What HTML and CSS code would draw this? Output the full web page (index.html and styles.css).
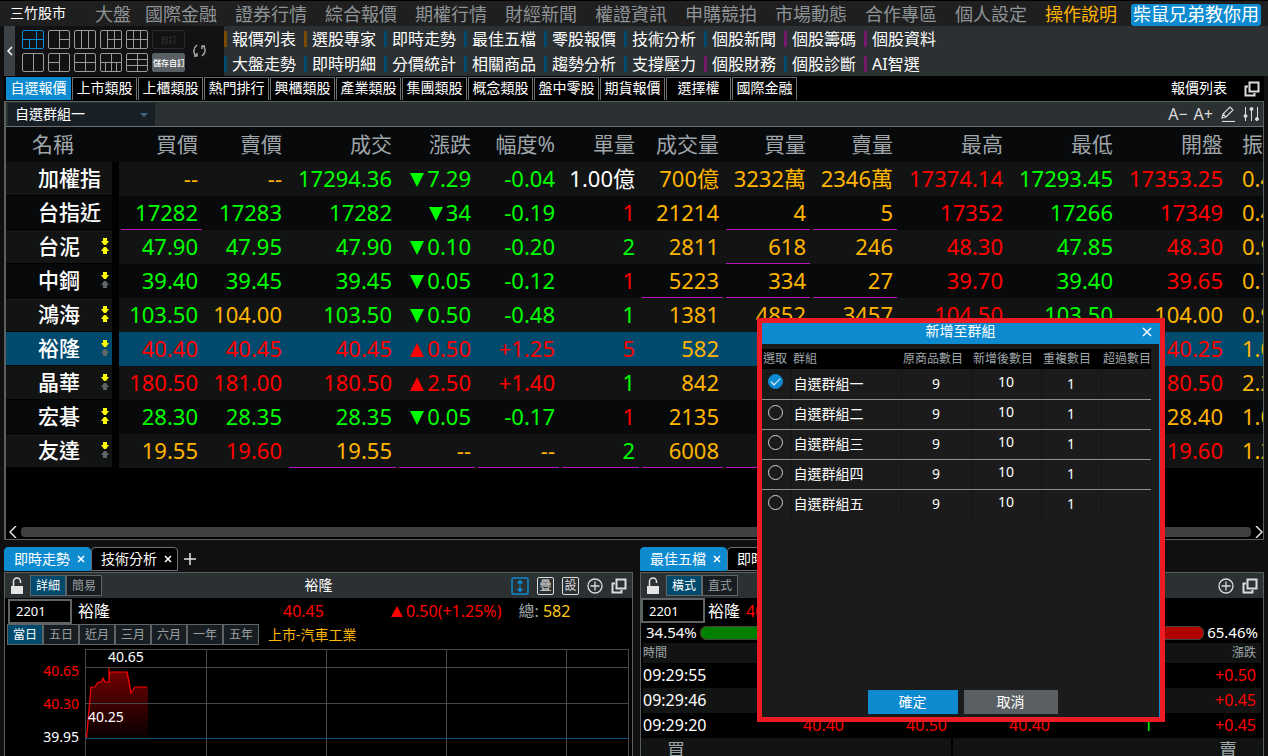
FILE: index.html
```html
<!DOCTYPE html>
<html lang="zh-Hant">
<head>
<meta charset="utf-8">
<title>三竹股市</title>
<link rel="stylesheet" href="styles.css">
</head>
<body>
<svg class="defs" aria-hidden="true">
  <symbol id="down" viewBox="0 0 8 7"><path d="M2 0h4v3h2L5 7H3L0 3h2z"/></symbol>
  <symbol id="up" viewBox="0 0 8 7"><path d="M2 7h4V4h2L5 0H3L0 4h2z"/></symbol>
  <symbol id="windows" viewBox="0 0 16 16"><path d="M5.500 1.500h9v9h-9zM4 5.500H1.500v9h9V12" fill="none" stroke="#dcdcdc" stroke-width="2"/></symbol>
  <symbol id="plus" viewBox="0 0 16 16"><path d="M8 3.500v9M3.500 8h9" stroke="#dcdcdc" stroke-width="1.300"/><circle cx="8" cy="8" r="7" fill="none" stroke="#dcdcdc" stroke-width="1.300"/></symbol>
  <symbol id="lock" viewBox="0 0 12 18"><path d="M2.500 9V4.500a3.500 3.500 0 0 1 7 0V6" fill="none" stroke="#e4e4e4" stroke-width="1.500"/><path d="M0 9h12v8H0z" fill="#e4e4e4"/></symbol>
  <symbol id="close" viewBox="0 0 8 8"><path d="M1 1l6 6M7 1L1 7" stroke="#fff" stroke-width="1.500"/></symbol>
</svg>
<div class="app">
  <header class="menubar">
    <h1 class="brand">三竹股市</h1>
    <nav class="menu">
      <a href="#" class="short">大盤</a><a href="#">國際金融</a><a href="#">證券行情</a><a href="#">綜合報價</a><a href="#">期權行情</a><a href="#">財經新聞</a><a href="#">權證資訊</a><a href="#">申購競拍</a><a href="#">市場動態</a><a href="#">合作專區</a><a href="#">個人設定</a><a href="#" class="gold">操作說明</a><a href="#" class="promo">柴鼠兄弟教你用</a>
    </nav>
  </header>

  <section class="ribbon">
    <button class="collapse" aria-label="收合"><svg width="6" height="10" viewBox="0 0 6 10"><path d="M5 1L1 5l4 4" fill="none" stroke="#fff" stroke-width="1.500"/></svg></button>
    <div class="layouts">
      <div class="layout-grid">
        <button class="on" aria-label="版面一"><svg viewBox="0 0 22 19"><path d="M14.500 0v19M0 9.500h22M7.500 9.500V19"/></svg></button>
        <button aria-label="版面二"><svg viewBox="0 0 22 19"><path d="M11.500 0v19M11.500 9.500H22"/></svg></button>
        <button aria-label="版面三"><svg viewBox="0 0 22 19"><path d="M7.500 0v19M14.500 0v19"/></svg></button>
        <button aria-label="版面四"><svg viewBox="0 0 22 19"><path d="M7.500 0v19M14.500 0v19M7.500 9.500H22"/></svg></button>
        <button aria-label="版面五"><svg viewBox="0 0 22 19"><path d="M7.500 0v19M14.500 0v19M0 9.500h22"/></svg></button>
        <button class="custom off">自訂</button>
        <button aria-label="版面六"><svg viewBox="0 0 22 19"><path d="M11.500 0v19"/></svg></button>
        <button aria-label="版面七"><svg viewBox="0 0 22 19"><path d="M11.500 0v19M0 9.500h11"/></svg></button>
        <button aria-label="版面八"><svg viewBox="0 0 22 19"><path d="M11.500 0v19M0 9.500h22"/></svg></button>
        <button aria-label="版面九"><svg viewBox="0 0 22 19"><path d="M11.500 0v19M0 9.500h22M5.500 9.500V19M16.500 9.500V19"/></svg></button>
        <button aria-label="版面十"><svg viewBox="0 0 22 19"><path d="M11.500 0v19M0 6.500h22M0 12.500h22"/></svg></button>
        <button class="custom">儲存自訂</button>
      </div>
      <button class="sync" aria-label="同步"><svg width="13" height="14" viewBox="0 0 13 14"><path d="M4 1C0 4 0 9 3 12M4 12.500V9M4 12H1M9 12c4-3 4-8 1-10.500M9 1.500V5M9 2h3" fill="none" stroke="#a8a8a8" stroke-width="1.500"/></svg></button>
    </div>
    <nav class="shortcuts">
      <a href="#" class="o">報價列表</a><a href="#" class="o">選股專家</a><a href="#">即時走勢</a><a href="#">最佳五檔</a><a href="#">零股報價</a><a href="#">技術分析</a><a href="#">個股新聞</a><a href="#" class="p">個股籌碼</a><a href="#" class="p">個股資料</a>
      <a href="#">大盤走勢</a><a href="#">即時明細</a><a href="#">分價統計</a><a href="#">相關商品</a><a href="#">趨勢分析</a><a href="#">支撐壓力</a><a href="#" class="p">個股財務</a><a href="#">個股診斷</a><a href="#" class="p">AI智選</a>
    </nav>
  </section>

  <section class="quote-tabs">
    <button class="on">自選報價</button><button>上市類股</button><button>上櫃類股</button><button>熱門排行</button><button>興櫃類股</button><button>產業類股</button><button>集團類股</button><button>概念類股</button><button>盤中零股</button><button>期貨報價</button><button>選擇權</button><button>國際金融</button>
    <span class="tab-title">報價列表</span>
    <svg width="16" height="16"><use href="#windows"/></svg>
  </section>

  <main class="quotes">
    <div class="quote-tools">
      <label class="group-pick"><select aria-label="自選群組"><option>自選群組一</option></select></label>
      <button aria-label="縮小字體">A−</button><button aria-label="放大字體">A+</button>
      <button aria-label="編輯"><svg width="14" height="16" viewBox="0 0 14 16" fill="none" stroke="#dcdcdc" stroke-width="1.200"><path d="M1 12l1-4 7-7 3 3-7 7zM2 8l3 3"/><path d="M1 15.500h13"/></svg></button>
      <button aria-label="欄位設定"><svg width="16" height="16" viewBox="0 0 16 16" stroke="#dcdcdc" fill="#dcdcdc"><path d="M2.500 1v14M8.500 1v14M14.500 1v14"/><circle cx="2.500" cy="10" r="1.500"/><circle cx="8.500" cy="3" r="1.500"/><circle cx="14" cy="13" r="1.500"/></svg></button>
    </div>
    <div class="quote-body">
    <table class="quote-table">
      <colgroup><col class="c-name"><col class="c-a"><col class="c-a"><col class="c-x"><col class="c-d"><col class="c-a"><col class="c-b"><col class="c-a"><col class="c-c"><col class="c-c"><col class="c-x"><col class="c-x"><col class="c-x"><col class="c-x"></colgroup>
      <thead><tr><th>名稱</th><th>買價</th><th>賣價</th><th>成交</th><th>漲跌</th><th>幅度%</th><th>單量</th><th>成交量</th><th>買量</th><th>賣量</th><th>最高</th><th>最低</th><th>開盤</th><th>振幅%</th></tr></thead>
      <tbody>
      <tr><th>加權指</th><td class="y">--</td><td class="y">--</td><td class="g">17294.36</td><td class="g"><i class="dn"></i>7.29</td><td class="g">-0.04</td><td>1.00億</td><td class="y">700億</td><td class="y">3232萬</td><td class="y">2346萬</td><td class="r">17374.14</td><td class="g">17293.45</td><td class="r">17353.25</td><td class="y">0.47</td></tr>
      <tr><th>台指近</th><td class="g u">17282</td><td class="g">17283</td><td class="g">17282</td><td class="g"><i class="dn"></i>34</td><td class="g">-0.19</td><td class="r">1</td><td class="y">21214</td><td class="y u">4</td><td class="y u">5</td><td class="r">17352</td><td class="g">17266</td><td class="r">17349</td><td class="y">0.49</td></tr>
      <tr><th>台泥<span class="marks"><svg class="hot"><use href="#down"/></svg><svg class="hot"><use href="#up"/></svg></span></th><td class="g">47.90</td><td class="g">47.95</td><td class="g">47.90</td><td class="g"><i class="dn"></i>0.10</td><td class="g">-0.20</td><td class="g">2</td><td class="y">2811</td><td class="y u">618</td><td class="y">246</td><td class="r">48.30</td><td class="g">47.85</td><td class="r">48.30</td><td class="y">0.93</td></tr>
      <tr><th>中鋼<span class="marks"><svg class="hot"><use href="#down"/></svg><svg><use href="#up"/></svg></span></th><td class="g">39.40</td><td class="g">39.45</td><td class="g">39.45</td><td class="g"><i class="dn"></i>0.05</td><td class="g">-0.12</td><td class="r">1</td><td class="y u">5223</td><td class="y u">334</td><td class="y u">27</td><td class="r">39.70</td><td class="g">39.40</td><td class="r">39.65</td><td class="y">0.75</td></tr>
      <tr><th>鴻海<span class="marks"><svg class="hot"><use href="#down"/></svg><svg class="hot"><use href="#up"/></svg></span></th><td class="g">103.50</td><td class="y">104.00</td><td class="g">103.50</td><td class="g"><i class="dn"></i>0.50</td><td class="g">-0.48</td><td class="g">1</td><td class="y">1381</td><td class="y">4852</td><td class="y">3457</td><td class="r">104.50</td><td class="g">103.50</td><td class="y">104.00</td><td class="y">0.96</td></tr>
      <tr class="sel"><th>裕隆<span class="marks"><svg class="hot"><use href="#down"/></svg><svg><use href="#up"/></svg></span></th><td class="r">40.40</td><td class="r">40.45</td><td class="r">40.45</td><td class="r"><i class="rise"></i>0.50</td><td class="r">+1.25</td><td class="r">5</td><td class="y">582</td><td></td><td></td><td></td><td></td><td class="r">40.25</td><td class="y">1.00</td></tr>
      <tr><th>晶華<span class="marks"><svg class="hot"><use href="#down"/></svg><svg><use href="#up"/></svg></span></th><td class="r">180.50</td><td class="r">181.00</td><td class="r">180.50</td><td class="r"><i class="rise"></i>2.50</td><td class="r">+1.40</td><td class="g">1</td><td class="y">842</td><td></td><td></td><td></td><td></td><td class="r">180.50</td><td class="y">2.25</td></tr>
      <tr><th>宏碁<span class="marks"><svg class="hot"><use href="#down"/></svg><svg class="hot"><use href="#up"/></svg></span></th><td class="g">28.30</td><td class="g">28.35</td><td class="g">28.35</td><td class="g"><i class="dn"></i>0.05</td><td class="g">-0.17</td><td class="r">1</td><td class="y">2135</td><td></td><td></td><td></td><td></td><td class="y">28.40</td><td class="y">1.06</td></tr>
      <tr><th>友達<span class="marks"><svg class="hot"><use href="#down"/></svg><svg><use href="#up"/></svg></span></th><td class="y">19.55</td><td class="r">19.60</td><td class="y u">19.55</td><td class="y u">--</td><td class="y u">--</td><td class="g u">2</td><td class="y u">6008</td><td class="u"></td><td></td><td></td><td></td><td class="r">19.60</td><td class="y">1.28</td></tr>
      </tbody>
    </table>
    </div>
    <div class="scroll">
      <svg width="8" height="12" viewBox="0 0 8 12"><path d="M7 0L1 6l6 6" fill="none" stroke="#e0e0e0" stroke-width="1.500"/></svg>
      <span class="thumb"></span>
      <svg width="8" height="12" viewBox="0 0 8 12"><path d="M1 0l6 6-6 6" fill="none" stroke="#e0e0e0" stroke-width="1.500"/></svg>
    </div>
  </main>

  <div class="lower">
    <section class="pane">
      <div class="pane-tabs">
        <button class="on">即時走勢<svg width="8" height="8"><use href="#close"/></svg></button><button>技術分析<svg width="8" height="8"><use href="#close"/></svg></button>
        <button class="add" aria-label="新增頁籤"><svg width="12" height="12" viewBox="0 0 12 12"><path d="M6 0v12M0 6h12" stroke="#e4e4e4" stroke-width="1.500"/></svg></button>
      </div>
      <div class="pane-box">
        <div class="pane-tools">
          <svg width="12" height="18"><use href="#lock"/></svg>
          <div class="seg"><button class="on">詳細</button><button>簡易</button></div>
          <h2>裕隆</h2>
          <div class="icons">
            <svg width="18" height="18" viewBox="0 0 18 18"><rect x="1" y="1" width="16" height="16" rx="1" fill="none" stroke="#0e8bd0" stroke-width="1.500"/><path d="M9 4v10M6.500 6L9 3l2.500 3zM6.500 12L9 15l2.500-3z" fill="#0e8bd0" stroke="#0e8bd0"/></svg>
            <button class="glyph">疊</button><button class="glyph">設</button>
            <svg width="16" height="16"><use href="#plus"/></svg>
            <svg width="16" height="16"><use href="#windows"/></svg>
          </div>
        </div>
        <div class="stock-row">
          <input value="2201" aria-label="股票代號"><span class="sname">裕隆</span><span class="r price">40.45</span><span class="r chg"><i class="rise small"></i>0.50(+1.25%)</span><span class="total">總: <b>582</b></span>
        </div>
        <div class="period-row">
          <div class="seg"><button class="on">當日</button><button>五日</button><button>近月</button><button>三月</button><button>六月</button><button>一年</button><button>五年</button></div>
          <span class="y">上市-汽車工業</span>
        </div>
        <div class="chart">
          <div class="axis"><span class="r">40.65</span><span class="r">40.30</span><span>39.95</span></div>
          <svg class="plot">
            <defs><linearGradient id="fade" x1="0" y1="0" x2="0" y2="1"><stop offset="0" stop-color="#700000"/><stop offset="1" stop-color="#080000"/></linearGradient></defs>
            <path d="M1.500 89L6 38h4l3-5h3l2-4 2 4h5l1-10h17l4 21 4-6h12v51z" fill="url(#fade)"/>
            <g stroke="#484848">
              <path d="M.5 0v120M121.500 0v120M241.500 0v120M361.500 0v120M481.500 0v120"/>
              <line x1="0" y1=".5" x2="100%" y2=".5"/><line x1="0" y1="18.500" x2="100%" y2="18.500"/><line x1="0" y1="54.500" x2="100%" y2="54.500"/>
              <line x1="0" y1="89.500" x2="100%" y2="89.500" stroke="#05507c"/>
            </g>
            <path d="M1.500 89L6 38h4l3-5h3l2-4 2 4h4V19v14l1-10h17l4 21 4-6h12" fill="none" stroke="#f00" stroke-width="1.200"/>
            <text x="23" y="13">40.65</text><text x="3" y="73">40.25</text>
          </svg>
        </div>
      </div>
    </section>

    <section class="pane">
      <div class="pane-tabs">
        <button class="on">最佳五檔<svg width="8" height="8"><use href="#close"/></svg></button><button>即時明細<svg width="8" height="8"><use href="#close"/></svg></button>
      </div>
      <div class="pane-box">
        <div class="pane-tools">
          <svg width="12" height="18"><use href="#lock"/></svg>
          <div class="seg"><button class="on">橫式</button><button>直式</button></div>
          <div class="icons"><svg width="16" height="16"><use href="#plus"/></svg><svg width="16" height="16"><use href="#windows"/></svg></div>
        </div>
        <div class="stock-row tight"><input value="2201" aria-label="股票代號"><span class="sname">裕隆</span><span class="r">40.45</span></div>
        <div class="ratio"><span>34.54%</span><span class="bar"><span class="buy" style="width:34.54%"></span></span><span>65.46%</span></div>
        <table class="ticks">
          <thead><tr><th>時間</th><th>買進</th><th>賣出</th><th>成交</th><th>單量</th><th>漲跌</th></tr></thead>
          <tbody>
          <tr><td>09:29:55</td><td class="r">40.40</td><td class="r">40.45</td><td class="r">40.45</td><td class="r">5</td><td class="r">+0.50</td></tr>
          <tr><td>09:29:46</td><td class="r">40.40</td><td class="r">40.45</td><td class="r">40.40</td><td class="g">1</td><td class="r">+0.45</td></tr>
          <tr><td>09:29:20</td><td class="r">40.40</td><td class="r">40.50</td><td class="r">40.40</td><td class="g">1</td><td class="r">+0.45</td></tr>
          </tbody>
        </table>
        <div class="sides"><span>買</span><span>賣</span></div>
      </div>
    </section>
  </div>
</div>

<div class="dialog" role="dialog" aria-labelledby="dlg">
  <div class="dialog-in">
    <div class="dialog-head"><h2 id="dlg">新增至群組</h2><button aria-label="關閉"><svg width="10" height="10" viewBox="0 0 10 10"><path d="M1 1l8 8M9 1L1 9" stroke="#fff" stroke-width="1.500"/></svg></button></div>
    <table class="groups">
      <colgroup><col class="k1"><col><col class="k3"><col class="k3"><col class="k4"><col class="k5"></colgroup>
      <thead><tr><th>選取</th><th>群組</th><th>原商品數目</th><th>新增後數目</th><th>重複數目</th><th>超過數目</th></tr></thead>
      <tbody>
      <tr><td><input type="radio" name="g" id="g1" checked></td><td><label for="g1">自選群組一</label></td><td>9</td><td>10</td><td>1</td><td></td></tr>
      <tr><td><input type="radio" name="g" id="g2"></td><td><label for="g2">自選群組二</label></td><td>9</td><td>10</td><td>1</td><td></td></tr>
      <tr><td><input type="radio" name="g" id="g3"></td><td><label for="g3">自選群組三</label></td><td>9</td><td>10</td><td>1</td><td></td></tr>
      <tr><td><input type="radio" name="g" id="g4"></td><td><label for="g4">自選群組四</label></td><td>9</td><td>10</td><td>1</td><td></td></tr>
      <tr><td><input type="radio" name="g" id="g5"></td><td><label for="g5">自選群組五</label></td><td>9</td><td>10</td><td>1</td><td></td></tr>
      </tbody>
    </table>
    <div class="dialog-actions"><button class="ok">確定</button><button class="cancel">取消</button></div>
  </div>
</div>
</body>
</html>
```

FILE: styles.css
```css
* { box-sizing: border-box; }
html, body { height: 100%; }
body {
  margin: 0;
  overflow: hidden;
  background: #101010;
  color: #fff;
  font: 14px/20px "Noto Sans", "Noto Sans CJK TC", sans-serif;
}
button, input, select { font: inherit; color: inherit; margin: 0; }
button { background: none; border: 0; padding: 0; }
h1, h2 { margin: 0; font-weight: 400; }
a { color: inherit; text-decoration: none; }
svg { display: block; flex: none; }
i { font-style: normal; }
.defs { display: none; }

.g { color: #0f0; }
.r { color: #f00; }
.y { color: #ffb400; }

.app {
  height: 100%;
  min-width: 1180px;
  display: flex;
  flex-direction: column;
  padding: 0 4px;
  background: #101010;
}

/* top menu */
.menubar {
  display: flex;
  align-items: center;
  height: 26px;
  margin: 0 -4px;
  border-top: 1px solid #000;
  background: #1f1f1f;
}
.brand { width: 95px; padding: 0 0 2px 10px; font-size: 14px; line-height: 22px; flex: none; }
.menu { display: flex; white-space: nowrap; font-size: 18px; line-height: 24px; color: #8d9396; }
.menu a { margin-right: 18px; }
.menu .short { margin-right: 14px; }
.menu .gold { color: #ffb400; margin-right: 14px; }
.menu .promo { margin: 2px 0 0; padding: 0 2px; border-radius: 3px; line-height: 20px; background: #0e8bd0; color: #fff; }

/* ribbon */
.ribbon { display: flex; height: 50px; background: #2b3033; flex: none; margin-right: -4px; }
.collapse { width: 11px; display: grid; place-items: center; background: #3b4144; }
.layouts { display: flex; align-items: center; gap: 8px; width: 209px; padding-left: 7px; background: #121214; flex: none; }
.layout-grid { display: grid; grid-template-columns: repeat(5, 22px) 33px; gap: 4px; }
.layout-grid button { height: 19px; border: 1px solid #9a9a9a; border-radius: 2px; overflow: hidden; }
.layout-grid button svg { width: 22px; height: 19px; margin: -1px; fill: none; stroke: #9a9a9a; }
.layout-grid .on { border-color: #0e8bd0; }
.layout-grid .on svg { stroke: #0e8bd0; }
.layout-grid .custom { font-size: 8px; line-height: 16px; font-weight: 500; white-space: nowrap; background: #5a5f63; border-color: #5a5f63; }
.layout-grid .off { background: none; border-color: #2a2a2a; color: #3a3a3a; font-weight: 400; }
.shortcuts {
  display: grid;
  grid-template-columns: repeat(9, 80px);
  grid-auto-rows: 25px;
  font-size: 16px;
  line-height: 16px;
  white-space: nowrap;
}
.shortcuts a { height: 16px; margin-top: 5px; padding-left: 5px; border-left: 3px solid #004a6e; }
.shortcuts .o { border-color: #7a4a00; }
.shortcuts .p { border-color: #78186c; }

/* quote category tabs */
.quote-tabs { display: flex; align-items: center; gap: 1px; height: 25px; padding: 1px 4px 1px 2px; background: #000; flex: none; }
.quote-tabs button { width: 65px; height: 23px; padding-bottom: 2px; line-height: 20px; border: 1px solid #6c7073; border-bottom: 0; }
.quote-tabs .on { background: #0e8bd0; border-color: #0e8bd0; }
.tab-title { margin: 0 16px 0 auto; padding-bottom: 2px; }

/* quote list */
.quotes { display: flex; flex-direction: column; height: 439px; flex: none; border: 1px solid #5a5f62; border-left-width: 2px; background: #000; }
.quote-tools { display: flex; align-items: center; gap: 8px; height: 25px; padding: 0 4px 0 2px; background: #2b3033; border-bottom: 1px solid #6c7073; flex: none; }
.quote-tools button { font-size: 16px; line-height: 22px; color: #dcdcdc; }
.quote-tools button:nth-of-type(2) { margin-left: -2px; }
.group-pick { position: relative; width: 147px; height: 23px; margin-right: auto; background: #182026; }
.group-pick select { appearance: none; width: 100%; height: 100%; padding: 0 7px; border: 0; background: none; }
.group-pick::after { content: ""; position: absolute; right: 7px; top: 10px; border: 4px solid transparent; border-top-color: #3b6784; border-bottom: 0; }
.quote-body { flex: 1; overflow: hidden; }
.quote-table { table-layout: fixed; width: 1331px; border-collapse: collapse; font-size: 22px; }
.c-name { width: 113px; }
.c-a { width: 84px; }
.c-b { width: 80px; }
.c-c { width: 87px; }
.c-d { width: 79px; }
.c-x { width: 110px; }
.quote-table th, .quote-table td { padding: 0 5px 2px 0; height: 34px; line-height: 32px; text-align: right; white-space: nowrap; overflow: hidden; }
.quote-table thead th { height: 35px; color: #9fa6a9; font-size: 21px; font-weight: 400; background: #08090b; }
.quote-table thead th:first-child { text-align: left; padding-left: 26px; }
.quote-table tbody th {
  position: relative;
  text-align: left;
  padding-left: 32px;
  font-size: 21px;
  font-weight: 500;
  background-image: linear-gradient(#000, #000), linear-gradient(#000, #000);
  background-size: 7px 100%, 100% 1px;
  background-position: right top, left bottom;
  background-repeat: no-repeat;
}
.quote-table td:last-child, .quote-table thead th:last-child { text-align: left; padding-left: 14px; }
.quote-table tbody tr { background: #121413; }
.quote-table tbody tr:nth-child(even) { background: #08090b; }
.quote-table tbody tr.sel { background: #004a6e; }
.quote-table .u {
  background: linear-gradient(#b814b8, #b814b8) 2px 100% / calc(100% - 3px) 1px no-repeat;
}
.marks { position: absolute; right: 10px; top: 8px; display: grid; gap: 2px; }
.marks svg { width: 8px; height: 7px; fill: #5f6467; }
.marks .hot { fill: #ff0; }
.dn, .rise { display: inline-block; margin-right: 3px; border: 7px solid transparent; }
.dn { border-top: 14px solid #0f0; border-bottom: 0; }
.rise { border-bottom: 14px solid #f00; border-top: 0; }
.rise.small { border-width: 0 6px 11px; margin-right: 3px; }
.scroll { display: flex; align-items: center; gap: 4px; height: 14px; padding: 0 0 0 3px; flex: none; }
.thumb { flex: 1; height: 10px; border-radius: 4px; background: #404040; }

/* lower panes */
.lower { flex: 1; min-height: 0; display: grid; grid-template-columns: 629fr 624fr; gap: 7px; padding-top: 7px; overflow: hidden; }
.pane { display: flex; flex-direction: column; min-width: 0; min-height: 0; }
.pane-tabs { display: flex; height: 25px; flex: none; }
.pane-tabs button { display: flex; align-items: center; gap: 7px; width: 87px; height: 24px; padding: 0 6px 0 9px; border: 1px solid #6c7073; border-radius: 4px 4px 0 0; background: #000; white-space: nowrap; }
.pane-tabs .on { background: #0e8bd0; border-color: #0e8bd0; }
.pane-tabs .add { width: auto; padding: 0 6px; border: 0; background: none; }
.pane-box { flex: 1; min-height: 0; display: flex; flex-direction: column; border: 1px solid #5a5f62; border-bottom: 0; background: #000; overflow: hidden; }
.pane-tools { position: relative; display: flex; align-items: center; gap: 7px; height: 25px; padding: 0 5px 0 6px; background: #2b3033; flex: none; }
.pane-tools h2 { flex: 1; text-align: center; font-size: 14px; padding: 0 0 2px 24px; }
.seg { display: flex; font-size: 12px; line-height: 18px; color: #9aa0a3; }
.seg button { width: 36px; height: 21px; border: 1px solid #5f6467; background: #171d21; }
.seg .on { background: #004a6e; color: #fff; }
.icons { display: flex; align-items: center; gap: 8px; margin-left: auto; }
.glyph { width: 17px; height: 18px; border: 1px solid #dcdcdc; border-radius: 2px; font-size: 12px; line-height: 15px; color: #dcdcdc; }
.stock-row { display: flex; align-items: center; height: 26px; padding-left: 3px; font-size: 16px; white-space: nowrap; flex: none; }
.stock-row input { width: 64px; height: 25px; padding: 0 6px; border: 2px solid #5f6467; background: #000; font-size: 13px; border-radius: 0; }
.sname { margin: 0 6px; }
.price { margin-left: 167px; }
.chg { margin-left: 67px; }
.total { margin-left: 17px; color: #9fa6a9; }
.total b { font-weight: 400; color: #ffc81e; }
.period-row { display: flex; align-items: center; gap: 9px; height: 21px; padding-left: 2px; flex: none; }
.chart { flex: 1; min-height: 0; display: flex; padding: 4px 3px 0 0; overflow: hidden; }
.axis { width: 80px; padding: 5px 6px 0 0; display: grid; align-content: start; text-align: right; line-height: 33px; flex: none; }
.plot { flex: 1; min-width: 0; height: 120px; border-right: 1px solid #484848; fill: #fff; font-size: 14px; }

.tight { height: 25px; padding-left: 0; }
.tight .sname { margin: 0 6px 0 3px; }
.ratio { display: flex; align-items: center; gap: 3px; height: 20px; padding: 0 5px; font-size: 15px; line-height: 18px; flex: none; }
.ratio > span:not(.bar) { padding-bottom: 2px; }
.bar { flex: 1; height: 14px; border: 1px solid #444; border-radius: 6px; background: #b00000; overflow: hidden; }
.buy { display: block; height: 100%; background: #008000; }
.ticks { width: 100%; padding: 0 2px; border-spacing: 0; table-layout: fixed; font-size: 16px; }
.ticks th { height: 20px; padding: 0 5px 0 0; font-size: 12px; line-height: 18px; font-weight: 400; color: #9fa6a9; text-align: right; background: #121413; }
.ticks td { height: 25px; padding: 0 5px 2px 0; line-height: 22px; text-align: right; }
.ticks th:first-child, .ticks td:first-child { text-align: left; }
.ticks tbody tr:nth-child(even) { background: #121413; }
.sides { display: grid; grid-template-columns: 1fr 1fr; gap: 2px; flex: none; font-size: 18px; line-height: 24px; color: #9fa6a9; }
.sides span { padding: 0 26px; background: #121413; }
.sides span:last-child { text-align: right; }

/* dialog */
.dialog { position: absolute; top: 318px; right: 103px; width: 408px; height: 404px; border: 5px solid #ed1c24; background: #1b1b1b; }
.dialog-in { height: 100%; display: flex; flex-direction: column; border-right: 1px solid #0e8bd0; }
.dialog-head { display: flex; align-items: center; height: 21px; padding: 0 7px; background: #0e8bd0; }
.dialog-head button { padding-bottom: 4px; }
.dialog-head h2 { flex: 1; padding-left: 10px; text-align: center; font-size: 14px; line-height: 16px; height: 21px; }
.groups { width: 389px; margin-top: 5px; border-collapse: collapse; table-layout: fixed; }
.k1 { width: 29px; }
.k3 { width: 70px; }
.k4 { width: 60px; }
.k5 { width: 50px; }
.groups th { height: 20px; padding: 0 0 0 2px; font-size: 12px; line-height: 18px; font-weight: 400; text-align: left; white-space: nowrap; color: #9fa6a9; background: #000; }
.groups th:first-child { padding-left: 1px; }
.groups td { height: 30px; padding: 0; text-align: center; border-right: 1px solid #151515; border-bottom: 1px solid #8f8f8f; }
.groups td:nth-child(2) { text-align: left; padding-left: 2px; }
.groups td:nth-child(4) { padding-bottom: 4px; }
.groups td:last-child { border-right: 0; }
.groups tbody tr:last-child td { border-bottom: 0; }
.groups input { appearance: none; display: block; width: 15px; height: 15px; margin: -4px 0 0 6px; border: 1px solid #d0d0d0; border-radius: 50%; }
.groups input:checked { border-color: #0e8bd0; background: #0e8bd0; }
.groups input:checked::after { content: ""; display: block; width: 8px; height: 4px; margin: 3px 0 0 2px; border: solid #fff; border-width: 0 0 1px 1px; transform: rotate(-45deg); }
.dialog-actions { display: flex; justify-content: center; gap: 6px; margin-top: auto; padding-bottom: 3px; padding-left: 4px; }
.dialog-actions button { width: 90px; height: 24px; line-height: 22px; background: #0e8bd0; }
.dialog-actions .cancel { width: 94px; background: #5a5f63; }
```
